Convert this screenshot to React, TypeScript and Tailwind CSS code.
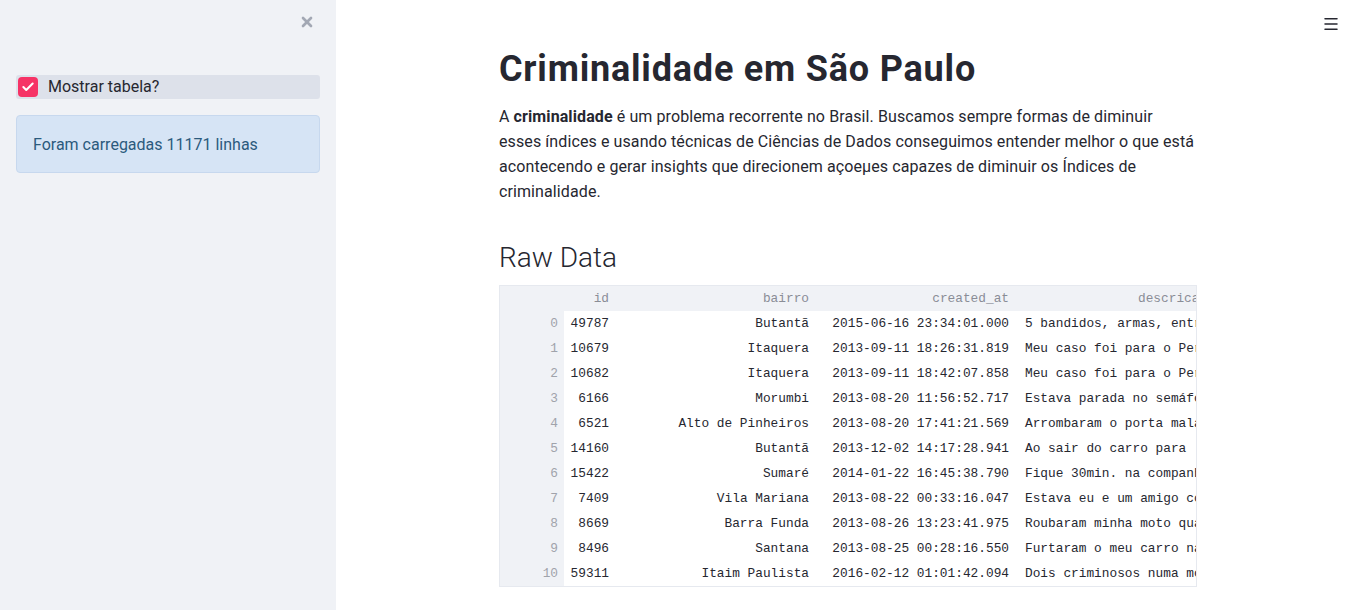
import { Check, X, Menu } from 'lucide-react';

const rows = [
  { i: 0, id: '49787', bairro: 'Butantã', created: '2015-06-16 23:34:01.000', desc: '5 bandidos, armas, entraram no' },
  { i: 1, id: '10679', bairro: 'Itaquera', created: '2013-09-11 18:26:31.819', desc: 'Meu caso foi para o Pericia' },
  { i: 2, id: '10682', bairro: 'Itaquera', created: '2013-09-11 18:42:07.858', desc: 'Meu caso foi para o Pericia' },
  { i: 3, id: '6166', bairro: 'Morumbi', created: '2013-08-20 11:56:52.717', desc: 'Estava parada no semáforo' },
  { i: 4, id: '6521', bairro: 'Alto de Pinheiros', created: '2013-08-20 17:41:21.569', desc: 'Arrombaram o porta malas' },
  { i: 5, id: '14160', bairro: 'Butantã', created: '2013-12-02 14:17:28.941', desc: 'Ao sair do carro para' },
  { i: 6, id: '15422', bairro: 'Sumaré', created: '2014-01-22 16:45:38.790', desc: 'Fique 30min. na companhia' },
  { i: 7, id: '7409', bairro: 'Vila Mariana', created: '2013-08-22 00:33:16.047', desc: 'Estava eu e um amigo conversando' },
  { i: 8, id: '8669', bairro: 'Barra Funda', created: '2013-08-26 13:23:41.975', desc: 'Roubaram minha moto quando' },
  { i: 9, id: '8496', bairro: 'Santana', created: '2013-08-25 00:28:16.550', desc: 'Furtaram o meu carro na rua' },
  { i: 10, id: '59311', bairro: 'Itaim Paulista', created: '2016-02-12 01:01:42.094', desc: 'Dois criminosos numa moto' },
];

export default function App() {
  return (
    <div className="flex h-[610px] w-[1366px] overflow-hidden bg-white text-[#262730]" style={{ fontFamily: 'Roboto, "Noto Sans", sans-serif' }}>
      {/* sidebar */}
      <aside className="w-[336px] shrink-0 bg-[#f0f2f6] px-4 pt-[14px]">
        <div className="flex justify-end pr-[5px]">
          <X className="h-[16px] w-[16px] text-[#a3a8b4]" strokeWidth={4} />
        </div>
        <label className="mt-[45px] flex h-[24px] items-center rounded-[3px] bg-[#dde1ea] pl-[2px]">
          <span className="flex h-[20px] w-[20px] items-center justify-center rounded-[4px] bg-[#f63366]">
            <Check className="h-[14px] w-[14px] text-white" strokeWidth={3.5} />
          </span>
          <span className="ml-[10px] text-[16px] text-[#262730]">Mostrar tabela?</span>
        </label>
        <div className="mt-[16px] flex h-[58px] items-center rounded-[4px] border border-[#c7d8ee] bg-[#d6e4f5] px-4 pt-[2px] text-[16px] text-[#2b5a7d]">
          Foram carregadas 11171 linhas
        </div>
      </aside>

      {/* main */}
      <main className="relative flex-1">
        <button className="absolute right-[26px] top-[15px] text-[#262730]">
          <Menu className="h-[18px] w-[18px]" strokeWidth={2} />
        </button>
        <div className="ml-[163px] w-[698px] pt-[46px]">
          <h1 className="text-[36px] font-bold leading-[46px] tracking-[0.8px]">Criminalidade em São Paulo</h1>
          <p className="mt-[12px] text-[16px] leading-[25px] tracking-[0.1px]">
            A <b className="font-bold">criminalidade</b> é um problema recorrente no Brasil. Buscamos sempre formas de diminuir esses índices e usando técnicas de Ciências de Dados conseguimos entender melhor o que está acontecendo e gerar insights que direcionem açoeµes capazes de diminuir os Índices de criminalidade.
          </p>
          <h2 className="mt-[36px] text-[28px] font-light leading-[36px]">Raw Data</h2>
          <div
            className="mt-[9px] h-[302px] w-[698px] overflow-hidden border border-[#e6e9ef] text-[12.8px] leading-[25px]"
            style={{ fontFamily: '"Liberation Mono", "DejaVu Sans Mono", monospace' }}
          >
            <div className="flex h-[25px] bg-[#f0f2f6] text-[#8a8d96]">
              <div className="w-[64px] shrink-0" />
              <div className="w-[50px] shrink-0 pr-[5px] text-right">id</div>
              <div className="w-[200px] shrink-0 pr-[5px] text-right">bairro</div>
              <div className="w-[200px] shrink-0 pr-[5px] text-right">created_at</div>
              <div className="w-[182px] shrink-0 overflow-hidden whitespace-nowrap pl-[124px]">descricao</div>
            </div>
            {rows.map((r) => (
              <div key={r.i} className="flex h-[25px]">
                <div className="w-[64px] shrink-0 bg-[#f0f2f6] pr-[6px] text-right text-[#a0a3ab]">{r.i}</div>
                <div className="w-[50px] shrink-0 pr-[5px] text-right">{r.id}</div>
                <div className="w-[200px] shrink-0 pr-[5px] text-right">{r.bairro}</div>
                <div className="w-[200px] shrink-0 pr-[5px] text-right">{r.created}</div>
                <div className="w-[182px] shrink-0 overflow-hidden whitespace-nowrap pl-[11px]">{r.desc}</div>
              </div>
            ))}
          </div>
        </div>
      </main>
    </div>
  );
}
